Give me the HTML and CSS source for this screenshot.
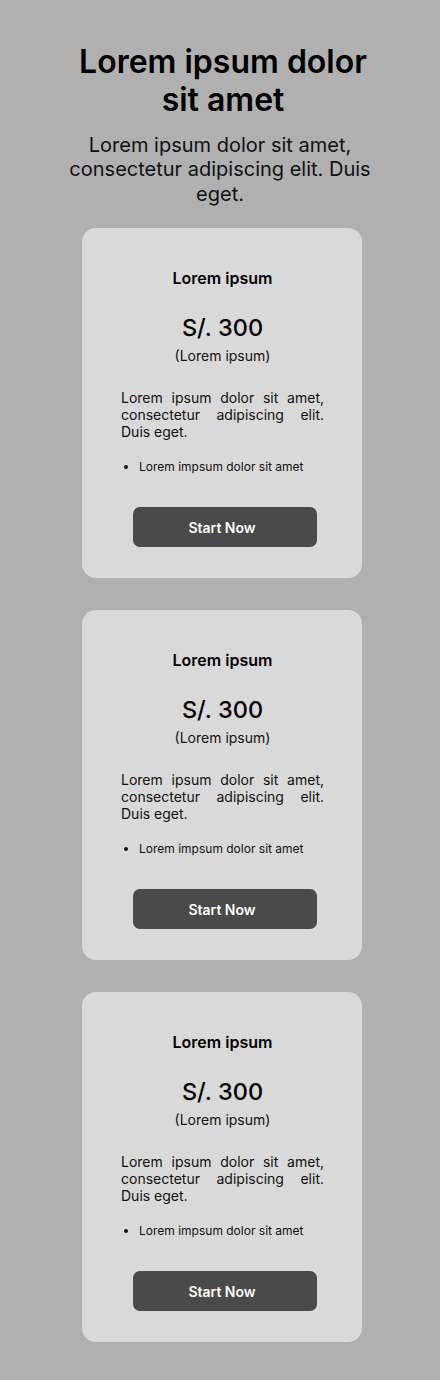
FILE: index.html
```html
<!DOCTYPE html>
<html lang="en">
<head>
<meta charset="utf-8">
<title>Pricing</title>
<link rel="stylesheet" href="styles.css">
</head>
<body>
<main class="page">
  <header class="hero">
    <h1 class="hero-title">Lorem ipsum dolor sit amet</h1>
    <p class="hero-text">Lorem ipsum dolor sit amet, consectetur adipiscing elit. Duis eget.</p>
  </header>
  <section class="plans">
    <article class="card">
      <h2 class="card-title">Lorem ipsum</h2>
      <div class="price">S/. 300</div>
      <div class="price-note">(Lorem ipsum)</div>
      <p class="card-text">Lorem ipsum dolor sit amet, consectetur adipiscing elit. Duis eget.</p>
      <ul class="features"><li>Lorem impsum dolor sit amet</li></ul>
      <button class="btn">Start Now</button>
    </article>
    <article class="card">
      <h2 class="card-title">Lorem ipsum</h2>
      <div class="price">S/. 300</div>
      <div class="price-note">(Lorem ipsum)</div>
      <p class="card-text">Lorem ipsum dolor sit amet, consectetur adipiscing elit. Duis eget.</p>
      <ul class="features"><li>Lorem impsum dolor sit amet</li></ul>
      <button class="btn">Start Now</button>
    </article>
    <article class="card">
      <h2 class="card-title">Lorem ipsum</h2>
      <div class="price">S/. 300</div>
      <div class="price-note">(Lorem ipsum)</div>
      <p class="card-text">Lorem ipsum dolor sit amet, consectetur adipiscing elit. Duis eget.</p>
      <ul class="features"><li>Lorem impsum dolor sit amet</li></ul>
      <button class="btn">Start Now</button>
    </article>
  </section>
</main>
</body>
</html>
```
FILE: styles.css
```css
html, body {
  margin: 0;
  padding: 0;
}
body {
  background: #b0b0b0;
  font-family: Inter, "Liberation Sans", sans-serif;
  color: #000;
}
.page {
  display: flex;
  flex-direction: column;
  align-items: center;
  padding: 43px 0 38px;
}
.hero {
  width: 310px;
  text-align: center;
}
.hero-title {
  margin: 0 auto;
  width: 300px;
  padding-left: 6px;
  font-size: 32px;
  line-height: 38.4px;
  font-weight: 600;
}
.hero-text {
  margin: 13px 0 0;
  font-size: 20px;
  line-height: 24.5px;
  font-weight: 400;
  color: #111;
}
.plans {
  display: flex;
  flex-direction: column;
  gap: 32px;
  margin-top: 22px;
  padding-left: 4px;
}
.card {
  box-sizing: border-box;
  width: 280px;
  height: 350px;
  background: #d9d9d9;
  border-radius: 14px;
  padding: 40px 38px 0 39px;
  display: flex;
  flex-direction: column;
  align-items: center;
}
.card-title {
  margin: 0;
  font-size: 16px;
  line-height: 20px;
  font-weight: 600;
}
.price {
  margin-top: 25px;
  font-size: 23.5px;
  line-height: 30px;
  font-weight: 500;
}
.price-note {
  font-size: 14px;
  line-height: 17px;
  margin-top: 4px;
  color: #111;
}
.card-text {
  align-self: stretch;
  margin: 25px 0 0;
  font-size: 14px;
  line-height: 17px;
  text-align: justify;
  color: #111;
}
.features {
  align-self: stretch;
  margin: 19px 0 0;
  padding-left: 18px;
  font-size: 12px;
  line-height: 15px;
  color: #111;
}
.btn {
  margin-top: 33px;
  width: 184px;
  height: 40px;
  border: none;
  border-radius: 7px;
  padding: 0 6px 0 0;
  background: #4a4a4a;
  color: #fff;
  font-family: Inter, "Liberation Sans", sans-serif;
  font-size: 14px;
  font-weight: 600;
  margin-right: -5px;
}
```
